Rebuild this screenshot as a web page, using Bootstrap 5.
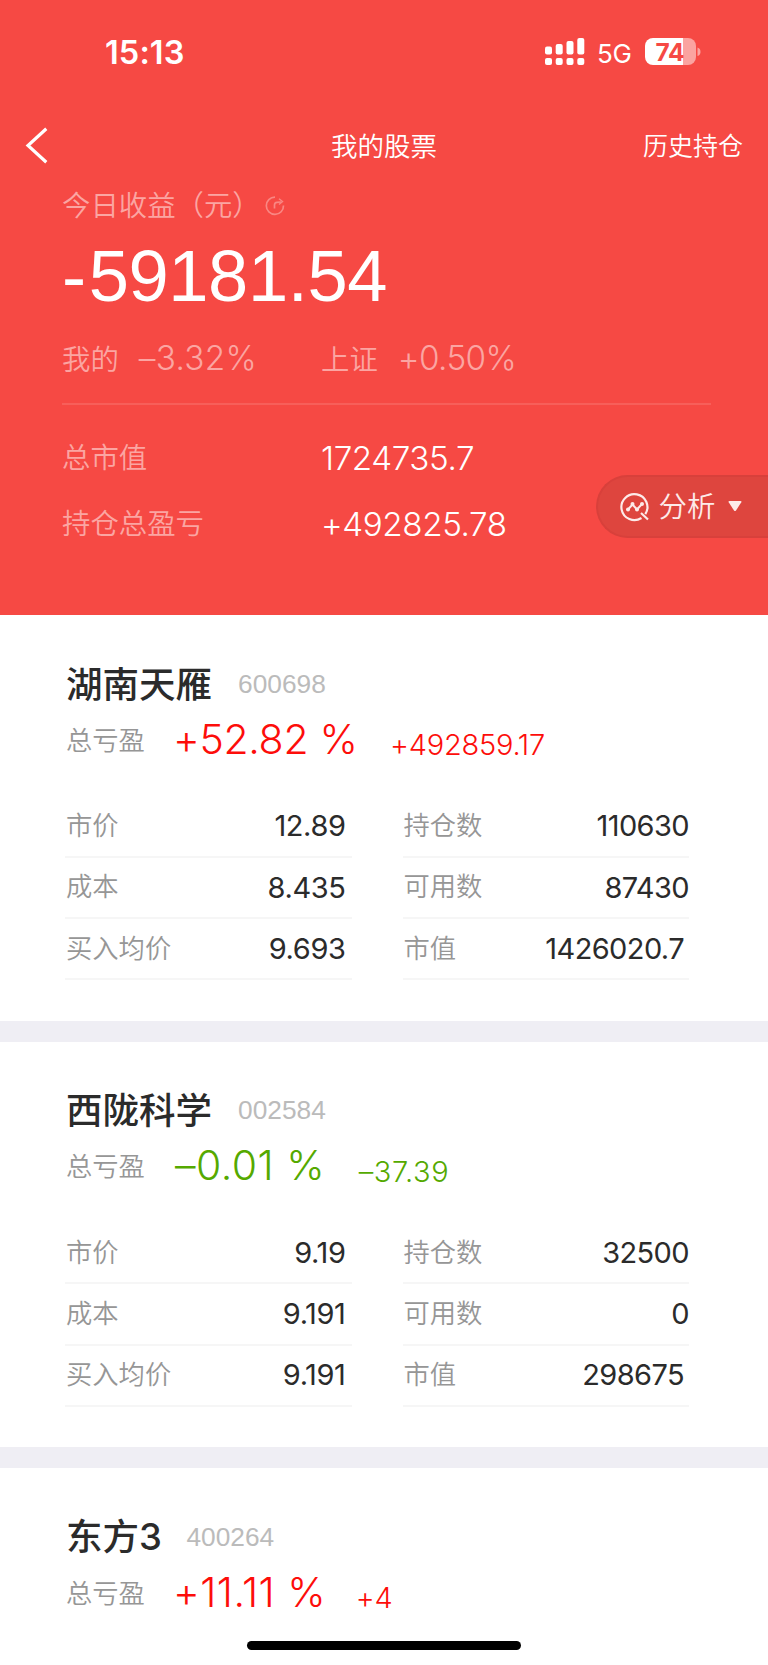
<!DOCTYPE html>
<html lang="zh-CN">
<head>
<meta charset="utf-8">
<meta name="viewport" content="width=device-width, initial-scale=1">
<title>我的股票</title>
<link href="https://cdn.jsdelivr.net/npm/bootstrap@5.3.0/dist/css/bootstrap.min.css" rel="stylesheet">
<style>
  body { font-family: "Noto Sans CJK SC", sans-serif; font-weight: 350; line-height: 1; width: 768px; height: 1665px; overflow: hidden; background: #fff; color: #2b2b2b; }
  .num { font-family: Inter, sans-serif; white-space: nowrap; }
  .helv { font-family: "Liberation Sans", Arial, sans-serif; white-space: nowrap; }
  .hero { background: #f64944; height: 615px; color: #fff; }
  .soft { color: #fba5a2; }
  .status-bar { height: 104px; padding-left: 105px; }
  .clock { font-size: 32.5px; font-weight: 600; padding-top: 37px; letter-spacing: .1px; }
  .network { font-size: 26px; font-weight: 400; }
  .nav-row { height: 83px; padding: 0 25px; display: grid; grid-template-columns: 1fr auto 1fr; }
  .nav-title { font-size: 26.5px; padding-bottom: 1px; }
  .nav-link-r { font-size: 25px; padding-bottom: 2px; }
  .cjk-l { font-size: 28.4px; }
  .today { height: 34px; }
  .total { font-size: 72.3px; height: 110px; padding-top: 1px; letter-spacing: -.4px; }
  .total-sign { margin-right: 3px; }
  .pct-row { height: 72px; padding-bottom: 17px; }
  .pct-row .num { font-size: 33.3px; font-weight: 300; margin-left: 20px; letter-spacing: -.6px; }
  .pct-row .pct-neg { letter-spacing: .3px; }
  .rule { height: 2px; margin: 0 57px 22px 62px; background: rgba(255,255,255,.12); }
  .sum-row { height: 66px; }
  .sum-row .num { font-size: 33.2px; letter-spacing: -.4px; padding-bottom: 2px; }
  .sum-row .cjk-l { padding-bottom: 7px; }
  .inset { padding-left: 62px; }
  .lab { width: 259px; }
  .analysis { top: 475px; right: 0; width: 172px; height: 63px; background: #de453e; border: 2px solid #d8403b; border-right: 0; border-radius: 32px 0 0 32px; color: #fdeae9; padding-left: 22px; font-size: 28.4px; }
  .analysis-text { margin-left: 8.5px; padding-bottom: 2px; }
  .caret { margin-left: 13px; }
  .stock { height: 405.5px; padding: 41px 79px 0 66px; }
  .gap-bar { height: 21px; background: #efeef4; }
  .stock-name { font-size: 36.5px; font-weight: 500; padding-bottom: 0; }
  .code { font-size: 26.3px; color: #bbb; margin-left: 26px; padding-top: 2px; }
  .name-row { height: 54px; }
  .pl-row { height: 58px; }
  .lbl { font-size: 26.3px; color: #969696; }
  .rate { font-size: 41px; margin-left: 28px; letter-spacing: -.3px; }
  .rate-narrow { letter-spacing: .5px; }
  .rate-neg { margin-left: 30px; }
  .amt { font-size: 29px; margin-left: 32.5px; padding-top: 11px; letter-spacing: -.25px; }
  .amt-wide { letter-spacing: .6px; margin-left: 33.5px; }
  .amt-last { margin-left: 29.5px; }
  .up { color: #fd0d0a; }
  .down { color: #55a900; }
  .cols { margin-top: 28.5px; gap: 52px; }
  .cell { height: 61.3px; border-bottom: 2px solid #f6f6f6; padding: 1px 0 0 1px; margin-left: -1px; }
  .cell .lbl { padding-bottom: 5px; }
  .cell .num { font-size: 29px; font-weight: 400; letter-spacing: -.6px; padding-bottom: 1.5px; }
  .cols > :first-child .cell { padding-right: 6px; }
  .cols > :first-child .cell .num { letter-spacing: -.4px; }
  .cell .inset-v { padding-right: 5px; }
  .home-bar { left: 247px; top: 1641px; width: 274px; height: 9px; background: #000; }
</style>
</head>
<body class="position-relative">
<header class="hero position-relative">
  <div class="status-bar d-flex">
    <div class="num clock">15:13</div>
    <svg class="ms-auto" width="223" height="104" viewBox="545 0 223 104" fill="#fff" aria-hidden="true">
      <rect x="545" y="46.500" width="7" height="8" rx="2"/><rect x="555.700" y="44" width="7" height="10.500" rx="2"/><rect x="566.500" y="41" width="7" height="13.500" rx="2"/><rect x="577.300" y="38" width="7" height="16.500" rx="2"/>
      <rect x="545" y="58" width="7" height="7" rx="2"/><rect x="555.700" y="58" width="7" height="7" rx="2"/><rect x="566.500" y="58" width="7" height="7" rx="2"/><rect x="577.300" y="58" width="7" height="7" rx="2"/>
      <text class="num network" x="597" y="62.700" textLength="35">5G</text>
      <path d="M653 38h30v27h-30a8 8 0 0 1-8-8V46a8 8 0 0 1 8-8z"/>
      <path d="M683 38h5a8 8 0 0 1 8 8v11a8 8 0 0 1-8 8h-5z" fill="#fba3a0"/>
      <path d="M697.500 47.500q3 1 3 4.300t-3 4.300z" fill="#fba3a0"/>
      <text class="num" x="655.500" y="60.500" font-size="24.500" font-weight="700" fill="#f64944" textLength="29">74</text>
    </svg>
  </div>
  <nav class="nav-row align-items-center">
    <svg width="24" height="40" viewBox="25 126 24 40" fill="none" stroke="#fff" stroke-width="3.200" aria-hidden="true"><path d="M46.300 128.800 28 145.500 46.300 162.200"/></svg>
    <div class="nav-title">我的股票</div>
    <div class="nav-link-r text-end">历史持仓</div>
  </nav>
  <div class="today inset soft d-flex align-items-center">
    <span class="cjk-l">今日收益（元）</span>
    <svg class="ms-1 mt-1" width="20" height="20" viewBox="0 0 20 20" fill="none" stroke="#f98783" stroke-width="1.700" aria-hidden="true"><path d="M10 1.200a8.600 8.600 0 1 0 8.500 8.300M9.500 12.500V9q0-2.500 2.500-2.700l4-.3"/><path d="m14 2.800 3.500 2.700-3.500 3" stroke-width="1.400"/></svg>
  </div>
  <div class="total helv inset d-flex align-items-center"><span><span class="total-sign">-</span>59181.54</span></div>
  <div class="pct-row inset soft d-flex align-items-center">
    <div class="lab d-flex align-items-center"><span class="cjk-l">我的</span><span class="num pct-neg">–3.32%</span></div>
    <span class="cjk-l">上证</span><span class="num">+0.50%</span>
  </div>
  <div class="rule"></div>
  <div class="sum-row inset d-flex align-items-center"><span class="lab soft cjk-l">总市值</span><span class="num">1724735.7</span></div>
  <div class="sum-row inset d-flex align-items-center"><span class="lab soft cjk-l">持仓总盈亏</span><span class="num">+492825.78</span></div>
  <div class="analysis position-absolute d-flex align-items-center">
    <svg width="30" height="30" viewBox="0 0 30 30" fill="none" stroke="#fdeae9" stroke-width="2.200" aria-hidden="true"><path d="M21.500 26A13 13 0 1 1 25.300 22.200M21 21l7 6.500"/><path d="m8 17.500 4.500-5 4.500 5 5-5.500" stroke-width="2"/><g fill="#fdeae9" stroke="none"><circle cx="8" cy="17.500" r="2"/><circle cx="12.500" cy="12" r="2"/><circle cx="17" cy="17.500" r="2"/><circle cx="22" cy="12" r="2"/></g></svg>
    <span class="analysis-text">分析</span>
    <svg class="caret" width="14" height="11" viewBox="0 0 14 11" aria-hidden="true"><path d="M1.500 0h11q1.500 0 .8 1.200L8 9.500q-1 1.200-2 0L.7 1.200Q0 0 1.500 0z" fill="#fdeae9"/></svg>
  </div>
</header>
<main>
  <section class="stock">
    <div class="name-row d-flex align-items-center"><span class="stock-name">湖南天雁</span><span class="code helv">600698</span></div>
    <div class="pl-row d-flex align-items-center"><span class="lbl">总亏盈</span><span class="num rate up">+52.82 %</span><span class="num amt up">+492859.17</span></div>
    <div class="cols d-flex">
      <div class="flex-fill w-50">
        <div class="cell d-flex align-items-center justify-content-between"><span class="lbl">市价</span><span class="num">12.89</span></div>
        <div class="cell d-flex align-items-center justify-content-between"><span class="lbl">成本</span><span class="num">8.435</span></div>
        <div class="cell d-flex align-items-center justify-content-between"><span class="lbl">买入均价</span><span class="num">9.693</span></div>
      </div>
      <div class="flex-fill w-50">
        <div class="cell d-flex align-items-center justify-content-between"><span class="lbl">持仓数</span><span class="num">110630</span></div>
        <div class="cell d-flex align-items-center justify-content-between"><span class="lbl">可用数</span><span class="num">87430</span></div>
        <div class="cell d-flex align-items-center justify-content-between"><span class="lbl">市值</span><span class="num inset-v">1426020.7</span></div>
      </div>
    </div>
  </section>
  <div class="gap-bar"></div>
  <section class="stock">
    <div class="name-row d-flex align-items-center"><span class="stock-name">西陇科学</span><span class="code helv">002584</span></div>
    <div class="pl-row d-flex align-items-center"><span class="lbl">总亏盈</span><span class="num rate rate-narrow rate-neg down">–0.01 %</span><span class="num amt amt-wide down">–37.39</span></div>
    <div class="cols d-flex">
      <div class="flex-fill w-50">
        <div class="cell d-flex align-items-center justify-content-between"><span class="lbl">市价</span><span class="num">9.19</span></div>
        <div class="cell d-flex align-items-center justify-content-between"><span class="lbl">成本</span><span class="num">9.191</span></div>
        <div class="cell d-flex align-items-center justify-content-between"><span class="lbl">买入均价</span><span class="num">9.191</span></div>
      </div>
      <div class="flex-fill w-50">
        <div class="cell d-flex align-items-center justify-content-between"><span class="lbl">持仓数</span><span class="num">32500</span></div>
        <div class="cell d-flex align-items-center justify-content-between"><span class="lbl">可用数</span><span class="num">0</span></div>
        <div class="cell d-flex align-items-center justify-content-between"><span class="lbl">市值</span><span class="num inset-v">298675</span></div>
      </div>
    </div>
  </section>
  <div class="gap-bar"></div>
  <section class="stock" style="height:197px">
    <div class="name-row d-flex align-items-center"><span class="stock-name">东方<span class="num">3</span></span><span class="code helv" style="margin-left:24.5px">400264</span></div>
    <div class="pl-row d-flex align-items-center"><span class="lbl">总亏盈</span><span class="num rate rate-narrow up">+11.11 %</span><span class="num amt amt-last up">+4</span></div>
  </section>
</main>
<div class="home-bar position-absolute rounded-pill"></div>
<script src="https://cdn.jsdelivr.net/npm/bootstrap@5.3.0/dist/js/bootstrap.bundle.min.js"></script>
</body>
</html>
